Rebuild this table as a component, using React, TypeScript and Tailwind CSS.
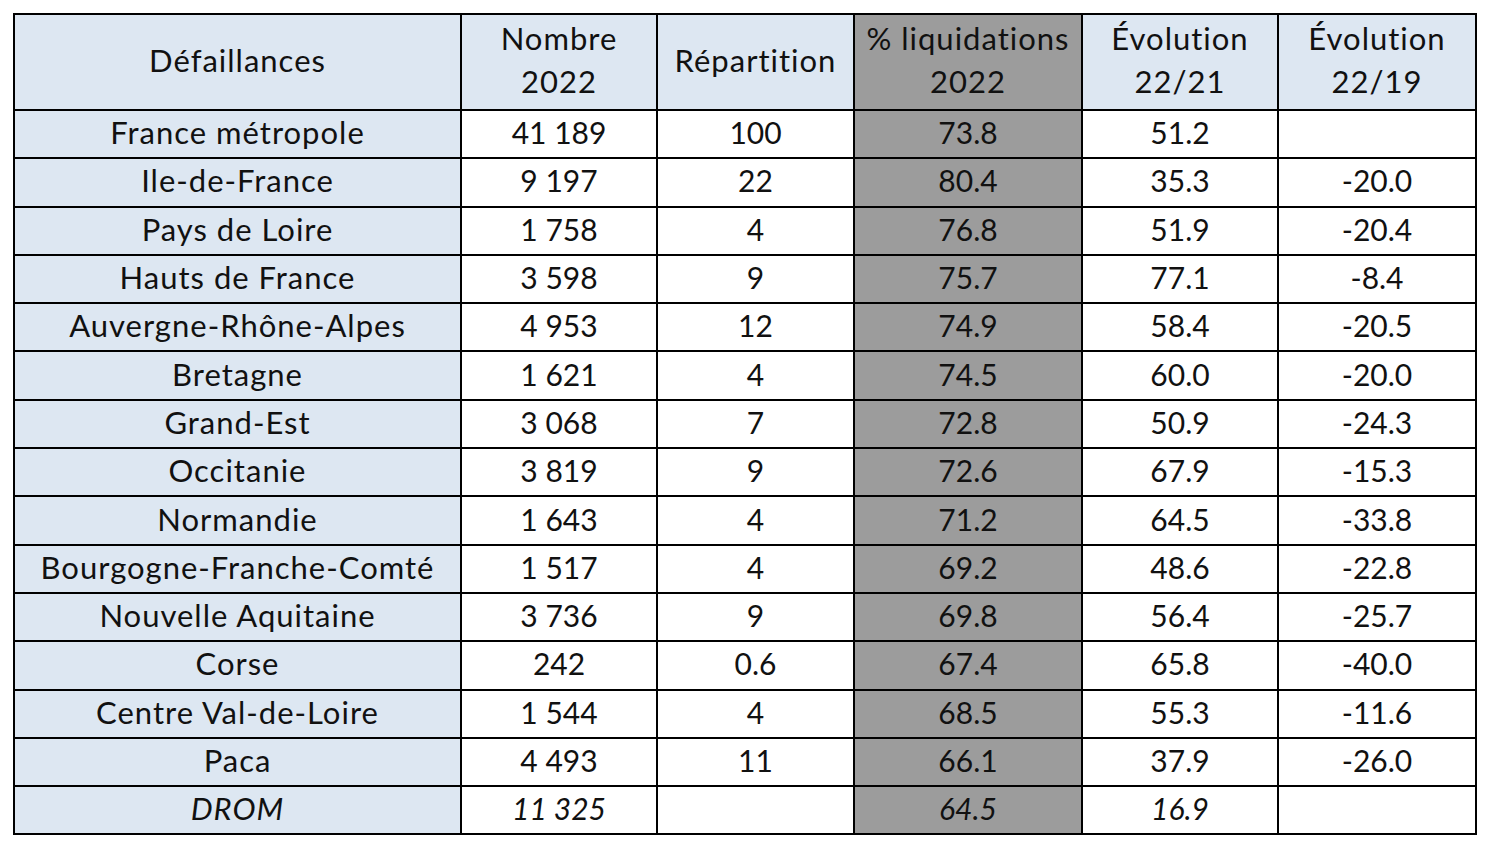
import React from "react";

const rows: [string, string, string, string, string, string][] = [
  ["France métropole", "41 189", "100", "73.8", "51.2", ""],
  ["Ile-de-France", "9 197", "22", "80.4", "35.3", "-20.0"],
  ["Pays de Loire", "1 758", "4", "76.8", "51.9", "-20.4"],
  ["Hauts de France", "3 598", "9", "75.7", "77.1", "-8.4"],
  ["Auvergne-Rhône-Alpes", "4 953", "12", "74.9", "58.4", "-20.5"],
  ["Bretagne", "1 621", "4", "74.5", "60.0", "-20.0"],
  ["Grand-Est", "3 068", "7", "72.8", "50.9", "-24.3"],
  ["Occitanie", "3 819", "9", "72.6", "67.9", "-15.3"],
  ["Normandie", "1 643", "4", "71.2", "64.5", "-33.8"],
  ["Bourgogne-Franche-Comté", "1 517", "4", "69.2", "48.6", "-22.8"],
  ["Nouvelle Aquitaine", "3 736", "9", "69.8", "56.4", "-25.7"],
  ["Corse", "242", "0.6", "67.4", "65.8", "-40.0"],
  ["Centre Val-de-Loire", "1 544", "4", "68.5", "55.3", "-11.6"],
  ["Paca", "4 493", "11", "66.1", "37.9", "-26.0"],
];

const cell = "border-2 border-black text-center p-0 pb-[4px] whitespace-nowrap";
const label = "text-[31px] tracking-[1px]";

export default function App() {
  return (
    <div
      className="w-[1496px] h-[850px] bg-white pt-[13px] pl-[13px] text-[#111]"
      style={{ fontFamily: "Lato, 'Open Sans', sans-serif" }}
    >
      <table className="border-collapse table-fixed w-[1462px] text-[30px]">
        <colgroup>
          <col className="w-[447px]" />
          <col className="w-[196px]" />
          <col className="w-[197px]" />
          <col className="w-[228px]" />
          <col className="w-[196px]" />
          <col className="w-[198px]" />
        </colgroup>
        <thead>
          <tr className="h-[96px] leading-[43px]">
            <th className={`${cell} ${label} font-normal bg-[#dde7f2]`}>Défaillances</th>
            <th className={`${cell} ${label} font-normal bg-[#dde7f2]`}>
              Nombre
              <br />
              2022
            </th>
            <th className={`${cell} ${label} font-normal bg-[#dde7f2]`}>Répartition</th>
            <th className={`${cell} ${label} font-normal bg-[#9c9c9c]`}>
              % liquidations
              <br />
              2022
            </th>
            <th className={`${cell} ${label} font-normal bg-[#dde7f2]`}>
              Évolution
              <br />
              22/21
            </th>
            <th className={`${cell} ${label} font-normal bg-[#dde7f2]`}>
              Évolution
              <br />
              22/19
            </th>
          </tr>
        </thead>
        <tbody className="leading-[36px]">
          {rows.map((r) => (
            <tr key={r[0]} className="h-[48.3px]">
              <td className={`${cell} ${label} bg-[#dde7f2]`}>{r[0]}</td>
              <td className={cell}>{r[1]}</td>
              <td className={cell}>{r[2]}</td>
              <td className={`${cell} bg-[#9c9c9c]`}>{r[3]}</td>
              <td className={cell}>{r[4]}</td>
              <td className={cell}>{r[5]}</td>
            </tr>
          ))}
          <tr className="h-[48.3px] italic">
            <td className={`${cell} ${label} bg-[#dde7f2]`}>DROM</td>
            <td className={cell}>11 325</td>
            <td className={cell}></td>
            <td className={`${cell} bg-[#9c9c9c]`}>64.5</td>
            <td className={cell}>16.9</td>
            <td className={cell}></td>
          </tr>
        </tbody>
      </table>
    </div>
  );
}
